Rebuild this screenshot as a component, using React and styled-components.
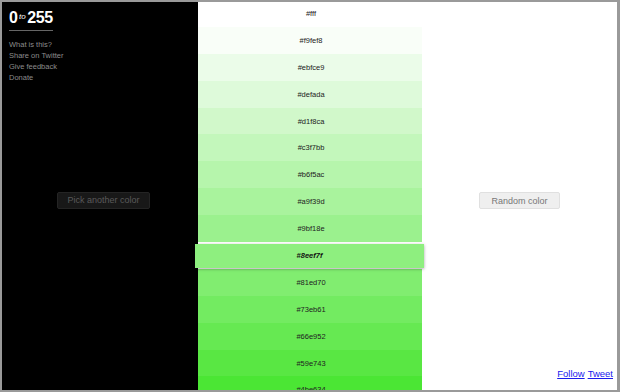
import React from "react";
import styled, { createGlobalStyle } from "styled-components";

const Global = createGlobalStyle`
  html, body { margin: 0; padding: 0; background: #999; }
  body { font-family: "Liberation Sans", Arial, sans-serif; }
`;

const Frame = styled.div`
  width: 620px;
  height: 392px;
  box-sizing: border-box;
  border-style: solid;
  border-color: #9a9a9a;
  border-width: 2px 3px 2px 2px;
  display: flex;
  overflow: hidden;
  background: #fff;
`;

const Side = styled.div`
  width: 196px;
  flex: none;
  background: #000;
  display: flex;
  flex-direction: column;
  padding: 8px 0 0 7px;
  box-sizing: border-box;
`;

const Logo = styled.div`
  display: inline-flex;
  align-items: baseline;
  color: #fff;
  font-weight: bold;
  font-size: 16px;
  line-height: 15px;
  letter-spacing: -0.4px;
  padding-bottom: 2px;
  border-bottom: 1px solid #666;
  width: 44px;
`;

const To = styled.span`
  font-style: italic;
  font-weight: normal;
  font-size: 8px;
  letter-spacing: 0;
  margin: 0 1.5px 0 1.5px;
  position: relative;
  top: -4px;
`;

const Links = styled.div`
  display: flex;
  flex-direction: column;
  margin-top: 8px;
`;

const NavLink = styled.span`
  color: #8c8c8c;
  font-size: 7.5px;
  line-height: 11px;
`;

const Center = styled.div`
  flex: 1;
  display: flex;
  align-items: center;
  justify-content: center;
  padding-top: 9px;
  margin-top: ${(p) => p.$shift || 0}px;
`;

const Button = styled.div`
  box-sizing: border-box;
  height: 17px;
  padding: 0 ${(p) => p.$pad}px;
  border-radius: 2px;
  font-size: 9px;
  display: flex;
  align-items: center;
  background: ${(p) => (p.$dark ? "#181818" : "#efefef")};
  border: 1px solid ${(p) => (p.$dark ? "#242424" : "#e0e0e0")};
  color: ${(p) => (p.$dark ? "#5a5a5a" : "#777")};
`;

const Column = styled.div`
  width: 224px;
  flex: none;
  display: flex;
  flex-direction: column;
  margin-top: -2px;
`;

const Row = styled.div`
  flex: none;
  height: 26.9px;
  display: flex;
  align-items: center;
  justify-content: center;
  font-size: 7.5px;
  color: #222;
  padding-left: 2px;
`;

const Selected = styled(Row)`
  height: 24px;
  margin: 1.5px -2px 1.4px -3px;
  padding-left: 0;
  font-weight: bold;
  font-style: italic;
  color: #111;
  box-shadow: 0 1px 3px rgba(0, 0, 0, 0.35);
  position: relative;
  z-index: 1;
`;

const Right = styled.div`
  flex: 1;
  display: flex;
  flex-direction: column;
  position: relative;
`;

const Social = styled.div`
  position: absolute;
  right: 4px;
  bottom: 11px;
  display: flex;
  gap: 3px;
`;

const SocialLink = styled.span`
  color: #1a1aee;
  font-size: 9.5px;
  text-decoration: underline;
`;

const colors = [
  "fff", "f9fef8", "ebfce9", "defada", "d1f8ca", "c3f7bb", "b6f5ac",
  "a9f39d", "9bf18e", "8eef7f", "81ed70", "73eb61", "66e952", "59e743", "4be634",
];

export default function App() {
  return (
    <>
      <Global />
      <Frame>
        <Side>
          <Logo>
            0<To>to</To>255
          </Logo>
          <Links>
            <NavLink>What is this?</NavLink>
            <NavLink>Share on Twitter</NavLink>
            <NavLink>Give feedback</NavLink>
            <NavLink>Donate</NavLink>
          </Links>
          <Center $shift={-82}>
            <Button $dark $pad={9}>Pick another color</Button>
          </Center>
        </Side>
        <Column>
          {colors.map((c) =>
            c === "8eef7f" ? (
              <Selected key={c} style={{ background: "#" + c }}>#{c}</Selected>
            ) : (
              <Row key={c} style={{ background: "#" + c }}>#{c}</Row>
            )
          )}
        </Column>
        <Right>
          <Center>
            <Button $pad={11}>Random color</Button>
          </Center>
          <Social>
            <SocialLink>Follow</SocialLink>
            <SocialLink>Tweet</SocialLink>
          </Social>
        </Right>
      </Frame>
    </>
  );
}
